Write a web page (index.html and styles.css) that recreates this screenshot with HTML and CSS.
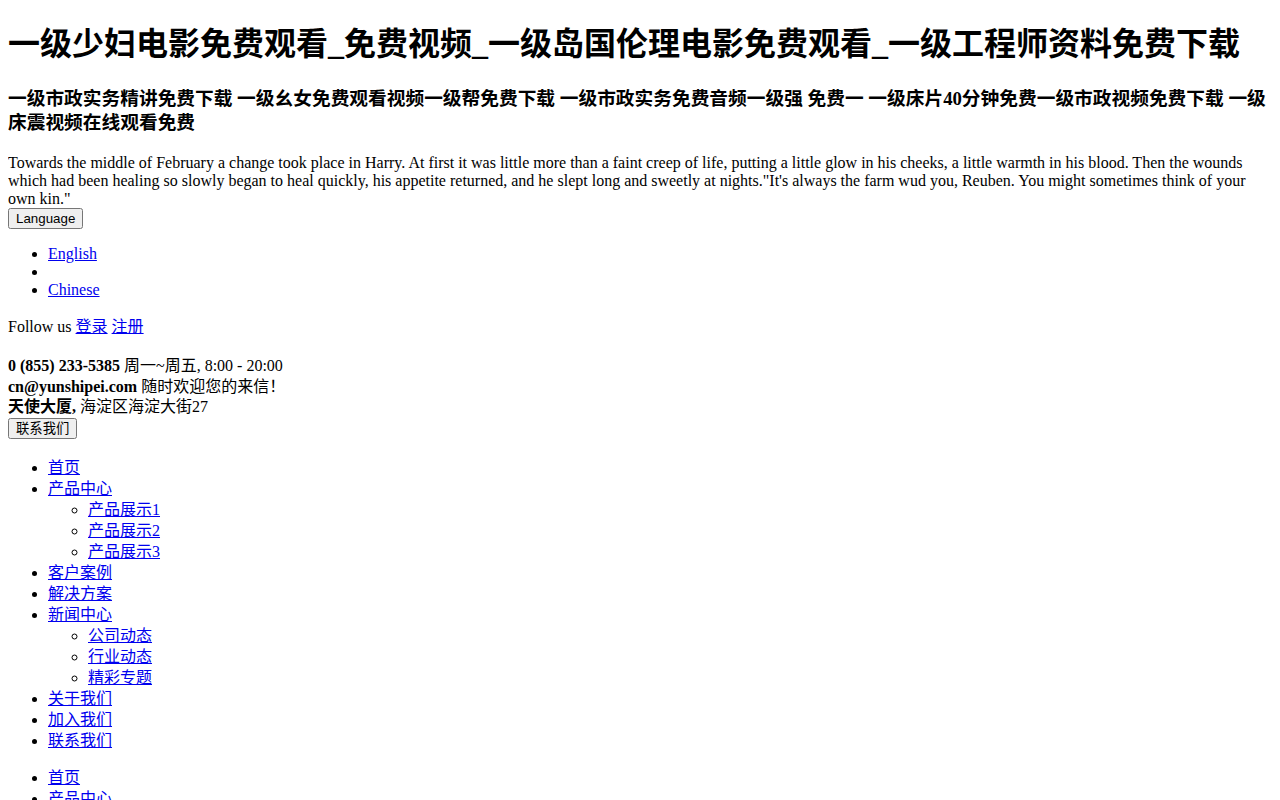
FILE: index.html
```html
<!DOCTYPE html>
<html lang="zh-CN">
<head>
<meta charset="utf-8">
<title>一级少妇电影免费观看_免费视频_一级岛国伦理电影免费观看_一级工程师资料免费下载</title>
<link rel="stylesheet" href="styles.css">
</head>
<body>
<h1 class="title">一级少妇电影免费观看_免费视频_一级岛国伦理电影免费观看_一级工程师资料免费下载</h1>
<h3 class="subtitle">一级市政实务精讲免费下载 一级幺女免费观看视频一级帮免费下载 一级市政实务免费音频一级强 免费一 一级床片40分钟免费一级市政视频免费下载 一级床震视频在线观看免费</h3>
<div class="intro">Towards the middle of February a change took place in Harry. At first it was little more than a faint creep of life, putting a little glow in his cheeks, a little warmth in his blood. Then the wounds which had been healing so slowly began to heal quickly, his appetite returned, and he slept long and sweetly at nights."It's always the farm wud you, Reuben. You might sometimes think of your own kin."</div>
<div class="lang">
<button class="btn" type="button">Language</button>
<ul class="lang-list">
<li><a href="#">English</a></li>
<li></li>
<li><a href="#">Chinese</a></li>
</ul>
</div>
<p class="follow">Follow us <a href="#">登录</a> <a href="#">注册</a></p>
<div class="contact">
<div class="contact-line"><b>0 (855) 233-5385</b> 周一~周五, 8:00 - 20:00</div>
<div class="contact-line"><b>cn@yunshipei.com</b> 随时欢迎您的来信！</div>
<div class="contact-line contact-last"><b>天使大厦,</b> 海淀区海淀大街27</div>
<button class="btn" type="button">联系我们</button>
</div>
<ul class="nav">
<li><a href="#">首页</a></li>
<li><a href="#">产品中心</a>
<ul class="sub">
<li><a href="#">产品展示1</a></li>
<li><a href="#">产品展示2</a></li>
<li><a href="#">产品展示3</a></li>
</ul>
</li>
<li><a href="#">客户案例</a></li>
<li><a href="#">解决方案</a></li>
<li><a href="#">新闻中心</a>
<ul class="sub">
<li><a href="#">公司动态</a></li>
<li><a href="#">行业动态</a></li>
<li><a href="#">精彩专题</a></li>
</ul>
</li>
<li><a href="#">关于我们</a></li>
<li><a href="#">加入我们</a></li>
<li><a href="#">联系我们</a></li>
</ul>
<ul class="nav">
<li><a href="#">首页</a></li>
<li><a href="#">产品中心</a>
<ul class="sub">
<li><a href="#">产品展示1</a></li>
<li><a href="#">产品展示2</a></li>
<li><a href="#">产品展示3</a></li>
</ul>
</li>
<li><a href="#">客户案例</a></li>
<li><a href="#">解决方案</a></li>
<li><a href="#">新闻中心</a></li>
<li><a href="#">关于我们</a></li>
<li><a href="#">加入我们</a></li>
<li><a href="#">联系我们</a></li>
</ul>
</body>
</html>
```

FILE: styles.css
```css
body {
  margin: 8px;
  font-family: "Liberation Serif", "Noto Sans CJK SC", serif;
  font-size: 16px;
  color: #000;
  background: #fff;
}

.title {
  font-size: 32px;
  font-weight: bold;
  line-height: 41.6px;
  margin: 16.44px 0 21.44px;
}

.subtitle {
  font-size: 18.72px;
  font-weight: bold;
  line-height: 24px;
  margin: 18.72px 0;
}

.intro {
  line-height: normal;
}

.btn {
  font-family: "Liberation Sans", "Noto Sans CJK SC", sans-serif;
  font-size: 13.333px;
  line-height: 15px;
}

.lang-list {
  margin: 16px 0;
  padding-left: 40px;
  line-height: normal;
}

.follow {
  margin: 16px 0 17px;
  line-height: 23px;
}

.contact {
  line-height: 21px;
  padding-bottom: 2px;
}

.contact-line {
  line-height: 21px;
}

.contact-last {
  line-height: 20px;
}

.nav {
  margin: 16px 0;
  padding-left: 40px;
  line-height: 21px;
}

.sub {
  margin: 0;
  padding-left: 40px;
  list-style-type: circle;
}

a {
  color: #0000ee;
}
```
